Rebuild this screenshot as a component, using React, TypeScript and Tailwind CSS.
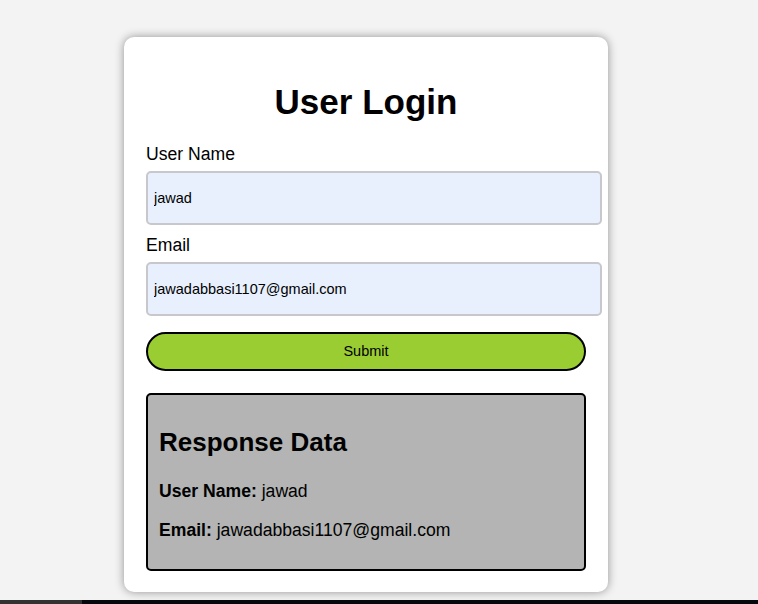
import React, { useState } from "react";

function App() {
  const [userName, setUserName] = useState("jawad");
  const [email, setEmail] = useState("jawadabbasi1107@gmail.com");
  const [data, setData] = useState({ userName: "jawad", email: "jawadabbasi1107@gmail.com" });

  const handleSubmit = (e) => {
    e.preventDefault();
    setData({ userName, email });
  };

  return (
    <div className="min-h-[604px] bg-[#f3f3f3] flex flex-col font-['Liberation_Sans',Arial,sans-serif] text-black">
      <div className="flex-1">
        <div className="ml-[124px] mt-[37px] w-[484px] bg-white rounded-[10px] shadow-[0_0_10px_rgba(0,0,0,0.4)] px-[22px] pt-[44px] pb-[21px]">
          <h1 className="text-center text-[35px] leading-[41px] font-bold">User Login</h1>
          <form onSubmit={handleSubmit}>
            <label htmlFor="userName" className="block mt-[22px] text-[17.6px] leading-[21px]">
              User Name
            </label>
            <input
              id="userName"
              type="text"
              value={userName}
              onChange={(e) => setUserName(e.target.value)}
              className="block mt-[6px] w-[456px] h-[54px] px-[6px] bg-[#e8f0fe] border-2 border-[#c8c8cc] rounded-[5px] text-[14.5px] outline-none"
            />
            <label htmlFor="email" className="block mt-[10px] text-[17.6px] leading-[21px]">
              Email
            </label>
            <input
              id="email"
              type="email"
              value={email}
              onChange={(e) => setEmail(e.target.value)}
              className="block mt-[6px] w-[456px] h-[54px] px-[6px] bg-[#e8f0fe] border-2 border-[#c8c8cc] rounded-[5px] text-[14.5px] outline-none"
            />
            <button
              type="submit"
              className="block mt-4 w-full h-[39px] bg-[#9acd32] border-2 border-black rounded-full text-[14.5px] cursor-pointer"
            >
              Submit
            </button>
          </form>
          {data && (
            <div className="mt-[22px] bg-[#b3b4b3] border-2 border-black rounded-[5px] px-[11px] pt-[32px] pb-[29px]">
              <h2 className="text-[26px] leading-[30px] font-bold">Response Data</h2>
              <p className="mt-[24px] text-[17.6px] leading-[20px]">
                <strong>User Name:</strong> {data.userName}
              </p>
              <p className="mt-[19px] text-[17.6px] leading-[20px]">
                <strong>Email:</strong> {data.email}
              </p>
            </div>
          )}
        </div>
      </div>
      <div className="flex h-[4px] mt-[8px]">
        <div className="w-[82px] bg-[#333333]" />
        <div className="flex-1 bg-[#05080c]" />
      </div>
    </div>
  );
}

export default App;
